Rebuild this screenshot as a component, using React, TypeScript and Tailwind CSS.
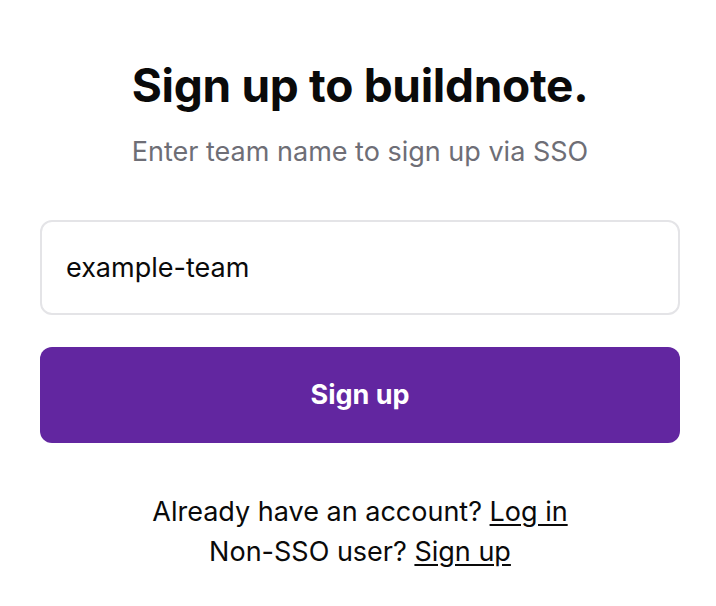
import React from "react";

export default function App() {
  return (
    <div className="w-full h-[606px] overflow-hidden bg-white">
      <div
        className="w-[720px] h-[606px] bg-white flex flex-col items-stretch px-10 pt-[57px] text-[#0a0a0a]"
        style={{ fontFamily: "Inter, 'Noto Sans', sans-serif" }}
      >
        <h1 className="text-[46px] leading-[56px] font-bold text-center tracking-[-0.3px] text-[#0a0a0a]">
          Sign up to buildnote.
        </h1>
        <p className="mt-[21px] text-[27px] leading-[36px] text-center text-[#6e6e76]">
          Enter team name to sign up via SSO
        </p>
        <input
          defaultValue="example-team"
          className="mt-[50px] h-[95px] w-full rounded-[12px] border-2 border-[#e4e4e7] px-[24px] text-[27px] text-[#0a0a0a] outline-none bg-white"
        />
        <button className="mt-[32px] h-[96px] w-full rounded-[12px] bg-[#6226a0] text-white text-[27px] font-bold">
          Sign up
        </button>
        <div className="mt-[49px] flex flex-col items-center text-[27px] leading-[40px] text-[#0a0a0a]">
          <p>
            Already have an account? <a href="#" className="underline underline-offset-[3px]">Log in</a>
          </p>
          <p>
            Non-SSO user? <a href="#" className="underline underline-offset-[3px]">Sign up</a>
          </p>
        </div>
      </div>
    </div>
  );
}
